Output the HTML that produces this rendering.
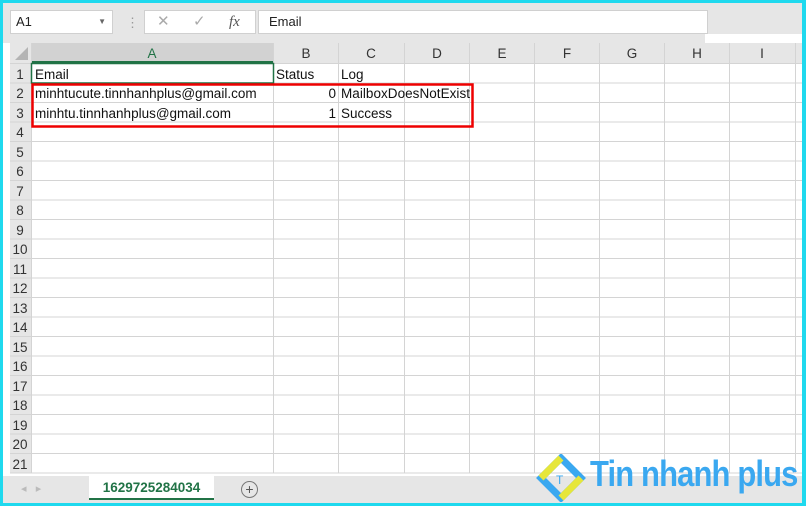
<!DOCTYPE html>
<html><head><style>
*{margin:0;padding:0;box-sizing:border-box}
body{width:806px;height:506px;overflow:hidden;background:#1fd9ee;font-family:"Liberation Sans",sans-serif;position:relative}
#win{position:absolute;left:3px;top:3px;width:799px;height:500px;background:#fff;overflow:hidden}
.a{position:absolute}
</style></head><body>
<div id="win">
<div class="a" style="left:0;top:0;width:799px;height:40px;background:#e6e6e6"></div>
<div class="a" style="left:7px;top:7px;width:103px;height:24px;background:#fff;border:1px solid #d0d0d0;font-size:13px;line-height:22px;padding-left:5px;color:#222">A1<span style="position:absolute;right:6px;top:0;font-size:8px;color:#666">▼</span></div>
<div class="a" style="left:123px;top:12px;color:#999;font-size:13px">⋮</div>
<div class="a" style="left:141px;top:7px;width:112px;height:24px;background:#fff;border:1px solid #d0d0d0;color:#aaa;font-size:15px;line-height:22px"><span style="position:absolute;left:12px">✕</span><span style="position:absolute;left:48px">✓</span><span style="position:absolute;left:84px;font-family:'Liberation Serif',serif;font-style:italic;color:#555">fx</span></div>
<div class="a" style="left:255px;top:7px;width:450px;height:24px;background:#fff;border:1px solid #d0d0d0;font-size:13px;line-height:22px;padding-left:10px;color:#222">Email</div>
<div class="a" style="left:702px;top:31px;width:97px;height:10px;background:#fff"></div>
<svg class="a" style="left:0;top:40px" width="799" height="440">
<rect x="7" y="0" width="792" height="20" fill="#e6e6e6"/>
<rect x="7" y="20" width="21" height="410" fill="#e6e6e6"/>
<rect x="28" y="0" width="242" height="20" fill="#d2d2d2"/>
<rect x="28" y="18" width="242" height="2" fill="#217346"/>
<polygon points="25,4 25,17 12,17" fill="#b4b4b4"/>
<g stroke="#d4d4d4" stroke-width="1">
<line x1="270.5" y1="0" x2="270.5" y2="430"/><line x1="335.5" y1="0" x2="335.5" y2="430"/><line x1="401.5" y1="0" x2="401.5" y2="430"/><line x1="466.5" y1="0" x2="466.5" y2="430"/><line x1="531.5" y1="0" x2="531.5" y2="430"/><line x1="596.5" y1="0" x2="596.5" y2="430"/><line x1="661.5" y1="0" x2="661.5" y2="430"/><line x1="726.5" y1="0" x2="726.5" y2="430"/><line x1="792.5" y1="0" x2="792.5" y2="430"/>
<line x1="28.5" y1="0" x2="28.5" y2="430"/>
<line x1="7" y1="20.5" x2="799" y2="20.5"/>
<line x1="7" y1="40" x2="799" y2="40"/><line x1="7" y1="59.5" x2="799" y2="59.5"/><line x1="7" y1="79" x2="799" y2="79"/><line x1="7" y1="98.5" x2="799" y2="98.5"/><line x1="7" y1="118" x2="799" y2="118"/><line x1="7" y1="137.5" x2="799" y2="137.5"/><line x1="7" y1="157" x2="799" y2="157"/><line x1="7" y1="176.5" x2="799" y2="176.5"/><line x1="7" y1="196" x2="799" y2="196"/><line x1="7" y1="215.5" x2="799" y2="215.5"/><line x1="7" y1="235" x2="799" y2="235"/><line x1="7" y1="254.5" x2="799" y2="254.5"/><line x1="7" y1="274" x2="799" y2="274"/><line x1="7" y1="293.5" x2="799" y2="293.5"/><line x1="7" y1="313" x2="799" y2="313"/><line x1="7" y1="332.5" x2="799" y2="332.5"/><line x1="7" y1="352" x2="799" y2="352"/><line x1="7" y1="371.5" x2="799" y2="371.5"/><line x1="7" y1="391" x2="799" y2="391"/><line x1="7" y1="410.5" x2="799" y2="410.5"/><line x1="7" y1="430" x2="799" y2="430"/>
</g>
<rect x="28.5" y="20.5" width="242" height="19.5" fill="none" stroke="#217346" stroke-width="1.5"/>
<g font-size="13.5" fill="#333" text-anchor="middle">
<text x="149" y="15" fill="#217346">A</text><text x="303" y="15">B</text><text x="368" y="15">C</text><text x="434" y="15">D</text><text x="499" y="15">E</text><text x="564" y="15">F</text><text x="629" y="15">G</text><text x="694" y="15">H</text><text x="759" y="15">I</text>
</g>
<g font-size="13.5" fill="#333" text-anchor="middle">
<text x="17" y="36">1</text><text x="17" y="55">2</text><text x="17" y="75">3</text><text x="17" y="94">4</text><text x="17" y="114">5</text><text x="17" y="133">6</text><text x="17" y="153">7</text><text x="17" y="172">8</text><text x="17" y="192">9</text><text x="17" y="211">10</text><text x="17" y="231">11</text><text x="17" y="250">12</text><text x="17" y="270">13</text><text x="17" y="289">14</text><text x="17" y="309">15</text><text x="17" y="328">16</text><text x="17" y="348">17</text><text x="17" y="367">18</text><text x="17" y="387">19</text><text x="17" y="406">20</text><text x="17" y="426">21</text>
</g>
<g font-size="13.5" fill="#111">
<text x="32" y="36">Email</text><text x="273" y="36">Status</text><text x="338" y="36">Log</text>
<text x="32" y="55">minhtucute.tinnhanhplus@gmail.com</text><text x="333" y="55" text-anchor="end">0</text><text x="338" y="55" textLength="129">MailboxDoesNotExist</text>
<text x="32" y="75">minhtu.tinnhanhplus@gmail.com</text><text x="333" y="75" text-anchor="end">1</text><text x="338" y="75">Success</text>
</g>
<rect x="29.5" y="41.5" width="440" height="42" fill="none" stroke="#e00" stroke-width="2.5"/>
</svg>
<div class="a" style="left:0;top:473px;width:799px;height:27px;background:#e6e6e6"></div>
<div class="a" style="left:18px;top:479px;color:#bbb;font-size:11px">◂ &nbsp;&nbsp;▸</div>
<div class="a" style="left:86px;top:473px;width:125px;height:24px;background:#fff;border-bottom:2px solid #217346;color:#217346;font-weight:bold;font-size:13.5px;text-align:center;line-height:24px">1629725284034</div>
<div class="a" style="left:238px;top:478px;width:17px;height:17px;border:1px solid #777;border-radius:50%;text-align:center;line-height:15px;color:#555;font-size:14px">+</div>
<svg class="a" style="left:533px;top:451px" width="50" height="48"><polygon points="25,4 45,24 25,44 5,24" fill="none" stroke="#3aa8f0" stroke-width="7"/><polyline points="5,24 25,4" stroke="#e6e63a" stroke-width="7"/><polyline points="25,44 45,24" stroke="#e6e63a" stroke-width="7"/><text x="20" y="30" font-size="12" fill="#3aa8f0">T</text></svg>
<div class="a" style="left:587px;top:450px;font-size:36px;font-weight:bold;color:#3aa8f0;letter-spacing:-1px;white-space:nowrap;transform:scaleX(0.86);transform-origin:left">Tin nhanh plus</div>
</div>
</body></html>
